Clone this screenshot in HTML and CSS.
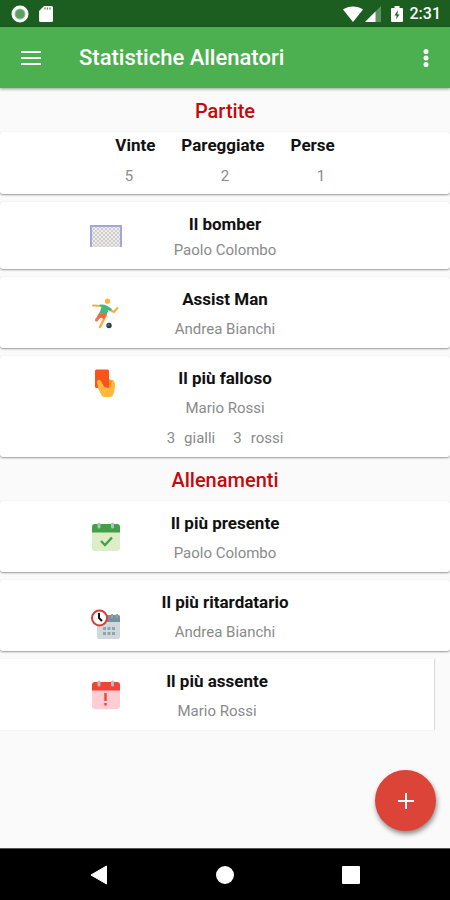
FILE: index.html
```html
<!DOCTYPE html>
<html lang="it">
<head>
<meta charset="utf-8">
<meta name="viewport" content="width=device-width, initial-scale=1">
<title>Statistiche Allenatori</title>
<link rel="stylesheet" href="styles.css">
</head>
<body>
<div class="status">
  <svg width="18" height="18" viewBox="0 0 18 18" aria-hidden="true"><circle cx="9" cy="9" r="7" fill="#9cc49e" stroke="#fff" stroke-width="3"/><circle cx="9" cy="9" r="4.500" fill="#5f9e63"/></svg>
  <svg class="status-sd" width="14" height="18" viewBox="0 0 14 18" aria-hidden="true"><path d="M5 1h7.500a1.500 1.500 0 0 1 1.500 1.500v13a1.500 1.500 0 0 1-1.500 1.500h-11A1.500 1.500 0 0 1 0 15.500V6z" fill="#fff"/><path d="M6 2.500v2M8.500 2.500v2M11 2.500v2" stroke="#4e7d51" stroke-width="1.200"/></svg>
  <span class="status-right">
    <svg width="20" height="18" viewBox="0 0 20 18" aria-hidden="true"><path d="M0 4.500C5.500.500 14.500.500 20 4.500L10 17z" fill="#fff"/></svg>
    <svg width="16" height="18" viewBox="0 0 16 18" aria-hidden="true"><path d="M0 17 16 1v16z" fill="#5f9062"/><path d="M0 17 10.500 6.500V17z" fill="#fff"/></svg>
    <svg class="status-battery" width="12" height="18" viewBox="0 0 12 18" aria-hidden="true"><path d="M3.500 1h5v2H11a1 1 0 0 1 1 1v12a1 1 0 0 1-1 1H1a1 1 0 0 1-1-1V4a1 1 0 0 1 1-1h2.500z" fill="#fff"/><path d="M7 5 3.500 10.500h2.300L5 14.500 8.500 9.500H6.300z" fill="#1b5e20"/></svg>
    <span>2:31</span>
  </span>
</div>
<header class="appbar">
  <button class="icon-button" aria-label="Menu"><svg width="22" height="16" viewBox="0 0 22 16"><path d="M1 2h20M1 8h20M1 14h20" stroke="#fff" stroke-width="2"/></svg></button>
  <h1>Statistiche Allenatori</h1>
  <button class="icon-button more" aria-label="Altre opzioni"><svg width="6" height="20" viewBox="0 0 6 20"><g fill="#fff"><circle cx="3" cy="3.500" r="2.500"/><circle cx="3" cy="10" r="2.500"/><circle cx="3" cy="16.500" r="2.500"/></g></svg></button>
</header>
<main>
  <h2>Partite</h2>
  <table class="card totals">
    <thead><tr><th scope="col">Vinte</th><th scope="col">Pareggiate</th><th scope="col">Perse</th></tr></thead>
    <tbody><tr><td>5</td><td>2</td><td>1</td></tr></tbody>
  </table>
  <section class="card compact">
    <svg class="icon" viewBox="0 0 32 32" aria-hidden="true">
      <defs><pattern id="net" width="4" height="4" patternUnits="userSpaceOnUse"><rect width="4" height="4" fill="#ededed"/><path d="M0 0l4 4M4 0L0 4" stroke="#c8c4c4" stroke-width=".8"/></pattern></defs>
      <path d="M1 5h30v21H1z" fill="url(#net)"/><path d="M1 26V5h30v21" fill="none" stroke="#a3a5df" stroke-width="2"/>
    </svg>
    <div class="info"><h3>Il bomber</h3><p>Paolo Colombo</p></div>
  </section>
  <section class="card">
    <svg class="icon" viewBox="0 0 32 32" aria-hidden="true">
      <g fill="none" stroke-linecap="round" stroke-linejoin="round"><path d="M11 8 3 7.500M20 12l4 2 3.500-4" stroke="#ffad42" stroke-width="2"/><path d="M16 17l-3 6-3 6" stroke="#ffad42" stroke-width="2.500"/><path d="M11 17l-3 3-1.500 2" stroke="#ff7043" stroke-width="3"/></g>
      <path d="M10 6.500c4-.500 7 .500 12 4.500l-1.500 2-2-1-2 5-7-2 2-6-2-1z" fill="#45b880"/><path d="M9.500 14.500l7 2-2.500 5-3-2-2 1-2-2z" fill="#f4673e"/>
      <circle cx="17.500" cy="3.200" r="2.600" fill="#ffb13d"/><circle cx="19" cy="27.500" r="2.700" fill="#203d43"/><path d="M17 26.500l2-1 1 2-2 1z" fill="#54717a"/>
    </svg>
    <div class="info"><h3>Assist Man</h3><p>Andrea Bianchi</p></div>
  </section>
  <section class="card">
    <svg class="icon icon-top" viewBox="0 0 32 32" aria-hidden="true">
      <path d="M8 14l4-2 11 1c2 2 2.500 5 2 7l-1.500 7c-.500 2-2 3-4 3h-5c-2 0-3-1-3.500-3L8 21z" fill="#ffb83e"/><rect x="5" y="2.500" width="14" height="18.500" rx="1.500" fill="#fa5418"/><path d="M13 21h6v-9l3 2-1 7-4 2z" fill="#ed9231"/><path d="M13 12h6v8h-5z" fill="#fa5418"/><path d="M7 15c0-2 2-3 3.500-1.500l4 6.500 5 1.500 3-3 2 1-1.500 6h-12L8 21z" fill="#ffb83e"/>
    </svg>
    <div class="info"><h3>Il più falloso</h3><p>Mario Rossi</p><p class="cards"><span>3</span><span>gialli</span><span class="reds">3</span><span>rossi</span></p></div>
  </section>
  <h2>Allenamenti</h2>
  <section class="card">
    <svg class="icon" viewBox="0 0 32 32" aria-hidden="true">
      <rect x="2" y="2" width="28" height="27" rx="3" fill="#dcedc8"/><path d="M2 10.500V5a3 3 0 0 1 3-3h22a3 3 0 0 1 3 3v5.500z" fill="#43a047"/><path d="M9 2v3M22.500 2v3" stroke="#b0bec5" stroke-width="3" stroke-linecap="round"/><path d="M11 19l4 4 7-7.500" fill="none" stroke="#43a047" stroke-width="2.400"/>
    </svg>
    <div class="info"><h3>Il più presente</h3><p>Paolo Colombo</p></div>
  </section>
  <section class="card">
    <svg class="icon icon-bottom" viewBox="0 0 32 32" aria-hidden="true">
      <rect x="7" y="7" width="23" height="24" rx="2" fill="#cfd8dc"/><path d="M7 14V7h21a2 2 0 0 1 2 2v5z" fill="#78909c"/><path d="M22 6v4M27 6v4" stroke="#90a4ae" stroke-width="2"/><path d="M13 20.500h12M13 25.500h12" stroke="#90a4ae" stroke-width="3" stroke-dasharray="3 1.500"/><circle cx="9.500" cy="10" r="7.500" fill="#fff" stroke="#df3c38" stroke-width="2"/><path d="M9 5v5l3 3" fill="none" stroke="#111" stroke-width="2"/>
    </svg>
    <div class="info"><h3>Il più ritardatario</h3><p>Andrea Bianchi</p></div>
  </section>
  <section class="card partial">
    <svg class="icon" viewBox="0 0 32 32" aria-hidden="true">
      <rect x="2" y="2" width="28" height="27" rx="3" fill="#ffcdd2"/><path d="M2 10.500V5a3 3 0 0 1 3-3h22a3 3 0 0 1 3 3v5.500z" fill="#f44336"/><path d="M9 2v3M22.500 2v3" stroke="#b0bec5" stroke-width="3" stroke-linecap="round"/><path d="M15.500 13v8M15.500 23v2.500" stroke="#f44336" stroke-width="2.400"/>
    </svg>
    <div class="info"><h3>Il più assente</h3><p>Mario Rossi</p></div>
  </section>
  <button class="fab" aria-label="Aggiungi"><svg width="16" height="16" viewBox="0 0 16 16"><path d="M8 0v16M0 8h16" stroke="#fff" stroke-width="2"/></svg></button>
</main>
<nav class="navbar" aria-label="Sistema">
  <button aria-label="Indietro"><svg width="18" height="20" viewBox="0 0 18 20"><path d="M1 10 16.500 1v18z" fill="#fff" stroke="#fff" stroke-linejoin="round"/></svg></button>
  <button aria-label="Home"><svg width="18" height="18" viewBox="0 0 18 18"><circle cx="9" cy="9" r="9" fill="#fff"/></svg></button>
  <button aria-label="Recenti"><svg width="18" height="18" viewBox="0 0 18 18"><rect width="18" height="18" rx="1" fill="#fff"/></svg></button>
</nav>
</body>
</html>
```
FILE: styles.css
```css
* { box-sizing: border-box; }
body {
  margin: 0;
  min-height: 100vh;
  display: flex;
  flex-direction: column;
  background: #fafafa;
  color: #111;
  font-family: Roboto, sans-serif;
}
h1, h2, h3, p { margin: 0; }
svg { display: block; flex: none; }
button {
  display: grid;
  place-items: center;
  padding: 0;
  border: 0;
  background: none;
}

.status {
  display: flex;
  align-items: center;
  height: 27px;
  padding: 0 9px 0 11px;
  background: #1b5e20;
  color: #fff;
  font-size: 16px;
  font-weight: 500;
}
.status-sd { margin-left: 10px; }
.status-right {
  display: flex;
  align-items: center;
  gap: 2px;
  margin-left: auto;
}
.status-battery { margin: 0 5px 0 8px; }
.status-right span { line-height: 27px; }
.status-right { padding-left: 4px; }

.appbar {
  display: flex;
  align-items: center;
  height: 61px;
  padding: 0 12px 0 16px;
  background: #4caf50;
  box-shadow: 0 1px 3px rgba(0, 0, 0, .4);
  color: #fff;
}
.icon-button { width: 30px; height: 40px; }
.more { width: 24px; margin-left: auto; }
h1 {
  margin-left: 33px;
  font-size: 22px;
  font-weight: 500;
}

main {
  position: relative;
  flex: 1;
}
h2 {
  padding-top: 2px;
  color: #c4090d;
  font-size: 20px;
  font-weight: 500;
  line-height: 42px;
  text-align: center;
}

.card {
  display: grid;
  width: 100%;
  margin-bottom: 8px;
  padding: 7px 0 4px;
  border-radius: 3px;
  background: #fff;
  box-shadow: 0 1px 2px rgba(0, 0, 0, .4);
}
.card:has(+ h2) { margin-bottom: 0; }
.compact { padding: 9px 0 6px; }
.partial {
  width: calc(100% - 16px);
  border-radius: 0;
  box-shadow: 1px 0 1px rgba(0, 0, 0, .12);
}
.icon {
  grid-area: 1 / 1;
  align-self: center;
  width: 32px;
  height: 32px;
  margin-left: 90px;
}
.icon-top { align-self: start; margin-top: 4px; }
.icon-bottom { align-self: end; margin-bottom: 7px; }
.info {
  grid-area: 1 / 1;
  text-align: center;
  line-height: 30px;
}
.compact .info { line-height: 26px; }
h3, th {
  font-size: 17px;
  font-weight: 700;
}
p, td {
  color: #8a8a8a;
  font-size: 15px;
  font-weight: 400;
}
.cards {
  display: flex;
  justify-content: center;
  gap: 9px;
}
.reds { margin-left: 9px; }

.totals { padding: 0; }
.totals tr {
  display: flex;
  justify-content: center;
}
.totals thead tr { gap: 26px; }
.totals th, .totals td { padding: 0; }
.totals th { line-height: 26px; }
.totals td { width: 96px; line-height: 36px; text-align: center; }

.fab {
  position: absolute;
  right: 14px;
  bottom: 17px;
  width: 61px;
  height: 61px;
  border-radius: 50%;
  background: #db4437;
  box-shadow: 1px 3px 5px rgba(0, 0, 0, .45);
}

.navbar {
  display: flex;
  justify-content: center;
  gap: 78px;
  height: 52px;
  border-top: 1px solid #555;
  background: #000;
}
.navbar button { width: 48px; }
```
